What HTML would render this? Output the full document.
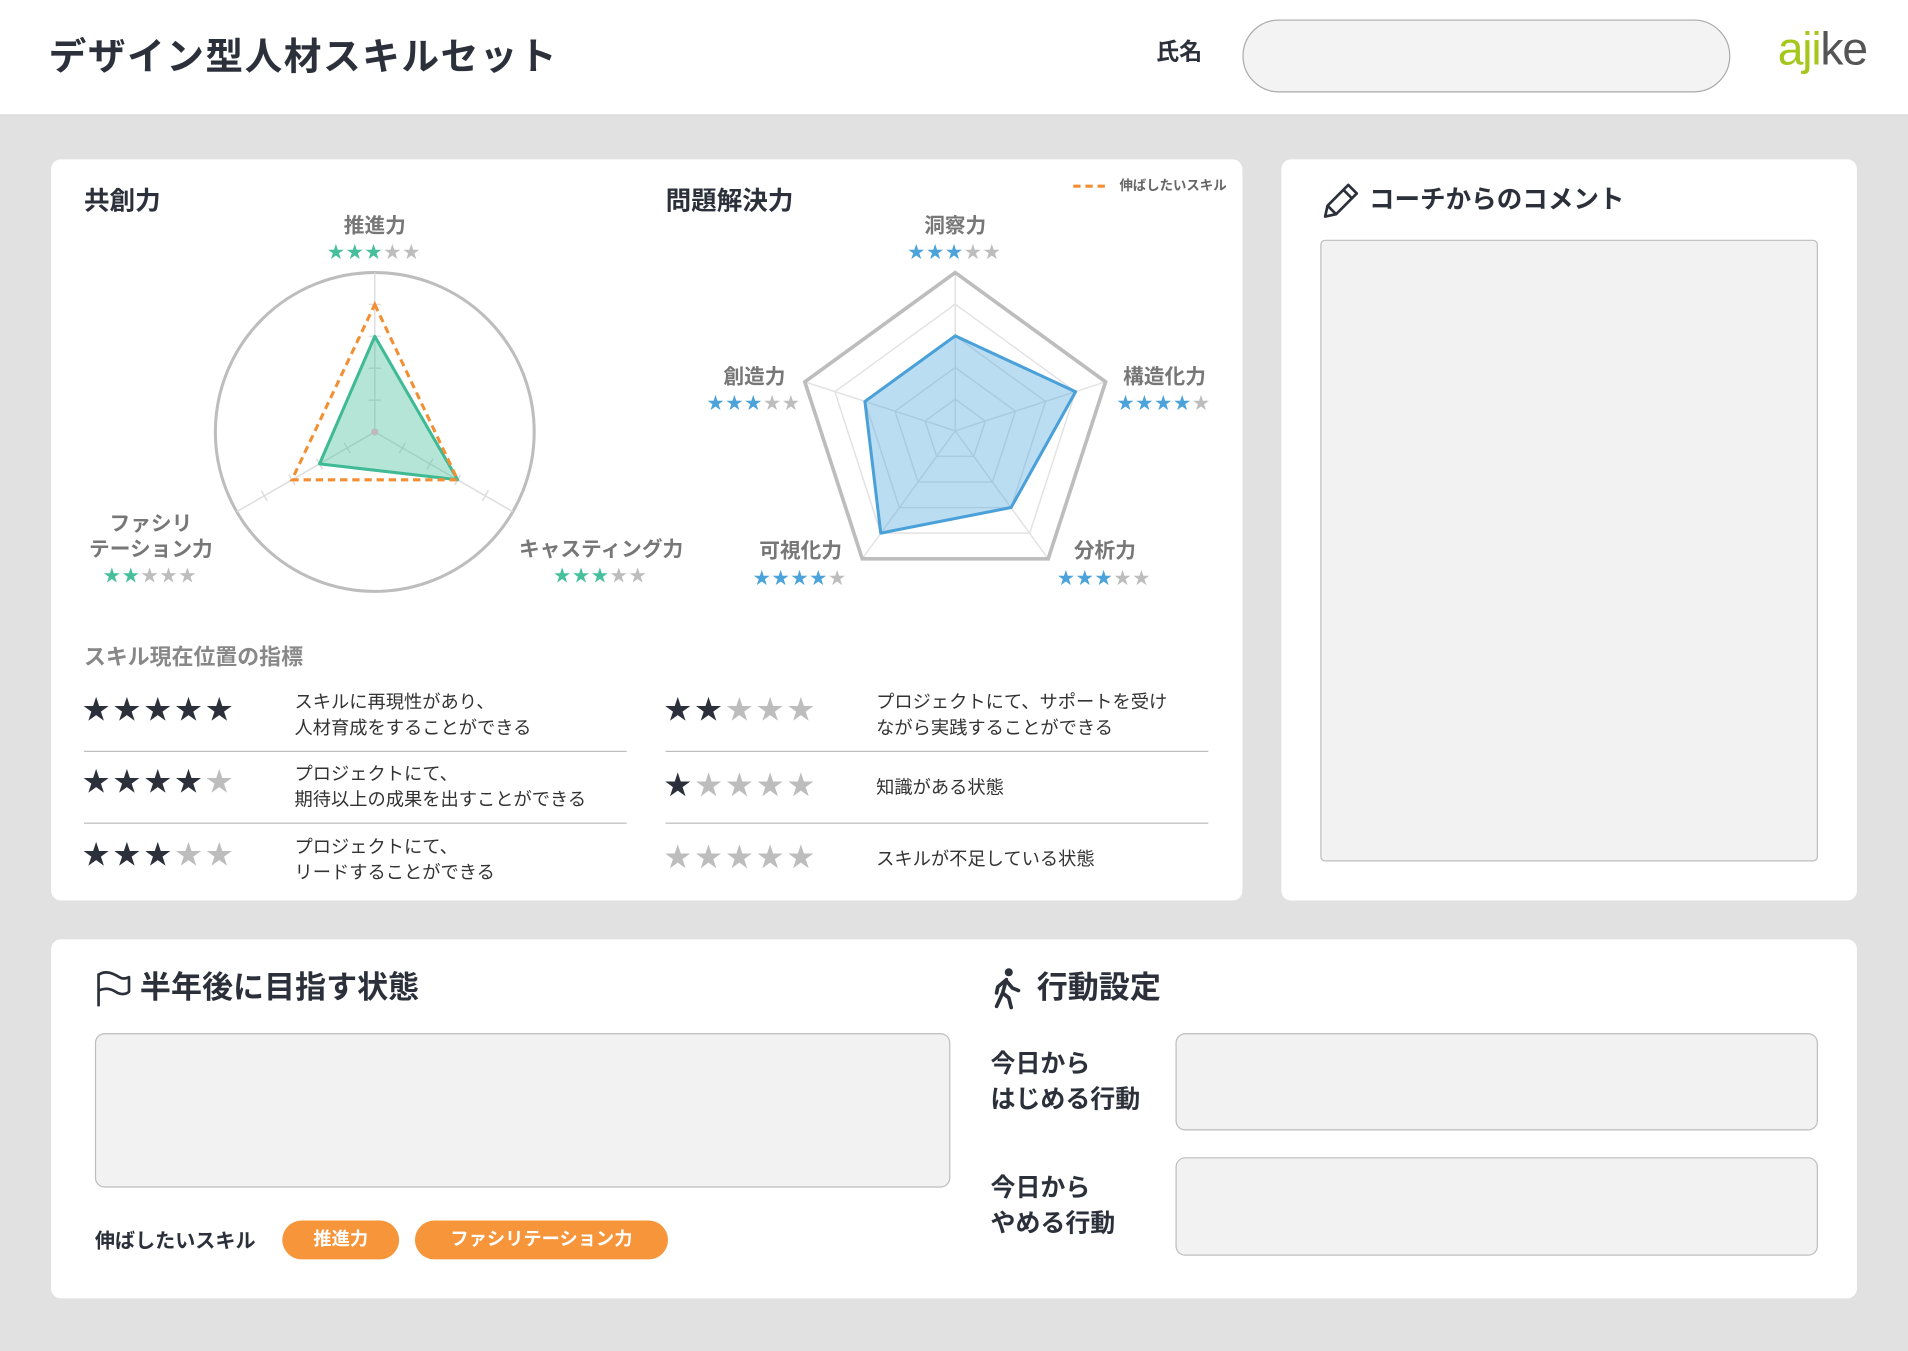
<!DOCTYPE html>
<html><head><meta charset="utf-8"><style>
html,body{margin:0;padding:0;width:1908px;height:1350px;overflow:hidden;background:#e1e1e1}
#w{position:absolute;left:0;top:0;width:1568px;height:1110px;transform:scale(1.21684);transform-origin:0 0;font-family:"Liberation Sans","Noto Sans CJK JP",sans-serif;color:#2b303b}
.a{position:absolute;white-space:nowrap}
.hdr{left:0;top:0;width:1568px;height:94px;background:#fff;border-bottom:1px solid #d6d6d6}
.card{position:absolute;background:#fff;border-radius:8px}
.b{font-weight:700}
.lab{font-size:17px;font-weight:700;color:#777;text-align:center;line-height:21px}
.st{font-size:14px;letter-spacing:1.5px;line-height:14px}
.g{color:#47bf9c}.bl{color:#4ba3da}.gr{color:#bdbdbd}.dk{color:#2b303b}
.bs{font-size:22px;letter-spacing:3.3px;line-height:22px}
.t{font-size:15px;line-height:21px;color:#333}
.ln{position:absolute;height:1px;background:#bdbdbd}
.box{position:absolute;background:#f2f2f2;border:1px solid #bdbdbd;border-radius:8px;box-sizing:border-box}
.pill{position:absolute;height:32px;line-height:32px;border-radius:16px;background:#f7953a;color:#fff;font-weight:700;font-size:15px;text-align:center}
</style></head><body><div id="w">
<div class="a hdr"></div>
<div class="a b" style="left:40px;top:27px;font-size:31px;line-height:40px;letter-spacing:1.2px">デザイン型人材スキルセット</div>
<div class="a b" style="left:950px;top:32px;font-size:19px;line-height:24px">氏名</div>
<div class="a" style="left:1021px;top:16px;width:401px;height:60px;box-sizing:border-box;border:1px solid #aaa;border-radius:30px;background:#f3f3f3"></div>
<div class="a" style="left:1461px;top:18px;font-size:38px;line-height:46px;letter-spacing:-1px"><span style="color:#a5c71c">aji</span><span style="color:#555;font-weight:300">ke</span></div>

<div class="card" style="left:42px;top:131px;width:979px;height:609px"></div>
<div class="card" style="left:1053px;top:131px;width:473px;height:609px"></div>
<div class="card" style="left:42px;top:772px;width:1484px;height:295px"></div>

<svg class="a" style="left:0;top:0" width="1568" height="1110" viewBox="0 0 1568 1110">
<circle cx="308" cy="355" r="131" fill="none" stroke="#bdbdbd" stroke-width="2.5"/>
<g stroke="#ddd" stroke-width="1.2" fill="none">
<line x1="308" y1="355" x2="308" y2="224"/><line x1="308" y1="355" x2="194.6" y2="420.5"/><line x1="308" y1="355" x2="421.4" y2="420.5"/>
<path d="M303 328.8H313M303 302.6H313M303 276.4H313M303 250.2H313M333.2 363.8L328.2 372.4M355.9 376.9L350.9 385.5M378.6 390L373.6 398.6M401.3 403.1L396.3 411.7M282.8 363.8L287.8 372.4M260.1 376.9L265.1 385.5M237.4 390L242.4 398.6M214.7 403.1L219.7 411.7"/>
</g>
<polygon points="308,276.4 376.1,394.3 262.6,381.2" fill="rgba(71,191,156,0.4)" stroke="#3fba95" stroke-width="2.5" stroke-linejoin="round"/>
<polygon points="308,250.2 376.1,394.3 239.9,394.3" fill="none" stroke="#f28f33" stroke-width="2.5" stroke-dasharray="6 4"/>
<circle cx="308" cy="355" r="3" fill="#bbb"/>
<g fill="none" stroke="#e2e2e2" stroke-width="1.2">
<polygon points="785,250 883.9,321.9 846.2,438.1 723.8,438.1 686.1,321.9"/>
<polygon points="785,276 859.2,329.9 830.9,417.1 739.1,417.1 710.8,329.9"/>
<polygon points="785,302 834.5,337.9 815.6,396.1 754.4,396.1 735.5,337.9"/>
<polygon points="785,328 809.7,346 800.3,375 769.7,375 760.3,346"/>
<path d="M785 354L785 224M785 354L908.6 313.8M785 354L861.4 459.2M785 354L708.6 459.2M785 354L661.4 313.8"/>
</g>
<polygon points="785,224 908.6,313.8 861.4,459.2 708.6,459.2 661.4,313.8" fill="none" stroke="#bdbdbd" stroke-width="3"/>
<polygon points="785,276 883.9,321.9 830.9,417.1 723.8,438.1 710.8,329.9" fill="rgba(77,166,220,0.38)" stroke="#4aa0d8" stroke-width="2.5" stroke-linejoin="round"/>
<line x1="882" y1="153" x2="912" y2="153" stroke="#f28f33" stroke-width="2.5" stroke-dasharray="6 4"/>
<g fill="none" stroke="#2b303b" stroke-width="2.2" stroke-linejoin="round">
<path d="M1089 178L1091 169L1108 152L1115 159L1098 176Z"/><path d="M1104 156L1111 163"/><path d="M1091 169L1098 176"/>
<path d="M81 827V800M81 801C87 797 93 800 98 803C101 805 104 804 106 803V815C104 817 99 818 95 815C90 812 86 812 81 814"/>
</g>
<g fill="#2b303b" stroke="#2b303b" stroke-linecap="round" stroke-linejoin="round">
<circle cx="829" cy="799" r="3.3" stroke="none"/>
<path d="M827 805L824 816L819 827M824 816L829 820L831 828M826 806L820 811L819 816M827 806L832 812L837 814" fill="none" stroke-width="3"/>
</g>
</svg>

<div class="a" style="left:920px;top:146px;font-size:11px;line-height:14px;color:#666;font-weight:700">伸ばしたいスキル</div>
<div class="a b" style="left:69px;top:153px;font-size:21px;line-height:26px">共創力</div>
<div class="a b" style="left:547px;top:153px;font-size:21px;line-height:26px">問題解決力</div>

<div class="a lab" style="left:258px;top:175px;width:100px">推進力</div>
<div class="a st" style="left:269px;top:200px"><span class="g">★★★</span><span class="gr">★★</span></div>
<div class="a lab" style="left:64px;top:420px;width:120px">ファシリ<br>テーション力</div>
<div class="a st" style="left:85px;top:466px"><span class="g">★★</span><span class="gr">★★★</span></div>
<div class="a lab" style="left:414px;top:441px;width:160px">キャスティング力</div>
<div class="a st" style="left:455px;top:466px"><span class="g">★★★</span><span class="gr">★★</span></div>

<div class="a lab" style="left:735px;top:175px;width:100px">洞察力</div>
<div class="a st" style="left:746px;top:200px"><span class="bl">★★★</span><span class="gr">★★</span></div>
<div class="a lab" style="left:570px;top:299px;width:100px">創造力</div>
<div class="a st" style="left:581px;top:324px"><span class="bl">★★★</span><span class="gr">★★</span></div>
<div class="a lab" style="left:907px;top:299px;width:100px">構造化力</div>
<div class="a st" style="left:918px;top:324px"><span class="bl">★★★★</span><span class="gr">★</span></div>
<div class="a lab" style="left:608px;top:442px;width:100px">可視化力</div>
<div class="a st" style="left:619px;top:468px"><span class="bl">★★★★</span><span class="gr">★</span></div>
<div class="a lab" style="left:858px;top:442px;width:100px">分析力</div>
<div class="a st" style="left:869px;top:468px"><span class="bl">★★★</span><span class="gr">★★</span></div>

<div class="a b" style="left:69px;top:529px;font-size:18px;line-height:22px;color:#888">スキル現在位置の指標</div>
<div class="a bs" style="left:68px;top:573px"><span class="dk">★★★★★</span></div>
<div class="a t" style="left:242px;top:567px">スキルに再現性があり、<br>人材育成をすることができる</div>
<div class="ln" style="left:69px;top:617px;width:446px"></div>
<div class="a bs" style="left:68px;top:632px"><span class="dk">★★★★</span><span class="gr">★</span></div>
<div class="a t" style="left:242px;top:626px">プロジェクトにて、<br>期待以上の成果を出すことができる</div>
<div class="ln" style="left:69px;top:676px;width:446px"></div>
<div class="a bs" style="left:68px;top:692px"><span class="dk">★★★</span><span class="gr">★★</span></div>
<div class="a t" style="left:242px;top:686px">プロジェクトにて、<br>リードすることができる</div>

<div class="a bs" style="left:546px;top:573px"><span class="dk">★★</span><span class="gr">★★★</span></div>
<div class="a t" style="left:720px;top:567px">プロジェクトにて、サポートを受け<br>ながら実践することができる</div>
<div class="ln" style="left:547px;top:617px;width:446px"></div>
<div class="a bs" style="left:546px;top:635px"><span class="dk">★</span><span class="gr">★★★★</span></div>
<div class="a t" style="left:720px;top:637px">知識がある状態</div>
<div class="ln" style="left:547px;top:676px;width:446px"></div>
<div class="a bs" style="left:546px;top:694px"><span class="gr">★★★★★</span></div>
<div class="a t" style="left:720px;top:696px">スキルが不足している状態</div>

<div class="a b" style="left:1125px;top:151px;font-size:21px;line-height:28px">コーチからのコメント</div>
<div class="box" style="left:1085px;top:197px;width:409px;height:511px;border-radius:4px"></div>

<div class="a b" style="left:115px;top:796px;font-size:25.5px;line-height:32px">半年後に目指す状態</div>
<div class="box" style="left:78px;top:849px;width:703px;height:127px"></div>
<div class="a b" style="left:78px;top:1009px;font-size:16.5px;line-height:22px">伸ばしたいスキル</div>
<div class="pill" style="left:232px;top:1003px;width:96px">推進力</div>
<div class="pill" style="left:341px;top:1003px;width:208px">ファシリテーション力</div>

<div class="a b" style="left:852px;top:796px;font-size:25.5px;line-height:32px">行動設定</div>
<div class="a b" style="left:814px;top:860px;font-size:20.5px;line-height:29px">今日から<br>はじめる行動</div>
<div class="box" style="left:966px;top:849px;width:528px;height:80px"></div>
<div class="a b" style="left:814px;top:962px;font-size:20.5px;line-height:29px">今日から<br>やめる行動</div>
<div class="box" style="left:966px;top:951px;width:528px;height:81px"></div>
</div></body></html>
